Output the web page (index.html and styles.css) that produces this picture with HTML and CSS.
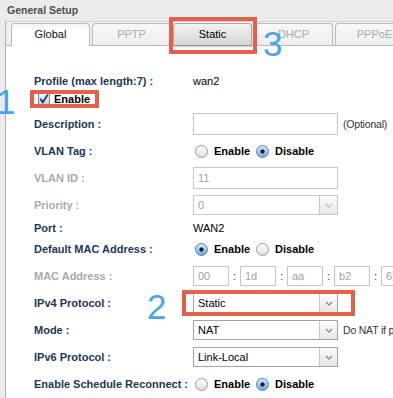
FILE: index.html
```html
<!DOCTYPE html>
<html lang="en">
<head>
    <meta charset="UTF-8">
    <meta name="viewport" content="width=device-width, initial-scale=1.0">
    <title>General Setup</title>
    <link rel="stylesheet" href="styles.css">
</head>
<body>
    <div class="page">
        <div class="title">General Setup</div>

        <div class="panel">
            <div class="tabs">
                <div class="tab active">Global</div>
                <div class="tab">PPTP</div>
                <div class="tab pressed marked">Static</div>
                <div class="tab">DHCP</div>
                <div class="tab">PPPoE</div>
            </div>

            <div class="content">
                <div class="row short">
                    <span class="label">Profile (max length:7) :</span>
                    <span class="value">wan2</span>
                </div>
                <div class="row short">
                    <label class="enable marked">
                        <span class="checkbox">
                            <svg width="12" height="12" viewBox="0 0 12 12"><polyline points="2.3,5.8 4.8,9.2 9.8,1.6" fill="none" stroke="#1d2d52" stroke-width="1.7"/></svg>
                        </span>
                        Enable
                    </label>
                </div>
                <div class="row">
                    <span class="label">Description :</span>
                    <span class="field"></span>
                    <span class="note">(Optional)</span>
                </div>
                <div class="row">
                    <span class="label">VLAN Tag :</span>
                    <span class="radio"></span><span class="opt">Enable</span>
                    <span class="radio on"></span><span class="opt">Disable</span>
                </div>
                <div class="row">
                    <span class="label off">VLAN ID :</span>
                    <span class="field dim">11</span>
                </div>
                <div class="row">
                    <span class="label off">Priority :</span>
                    <div class="select dim">
                        <span class="select-text">0</span>
                        <span class="select-arrow"><svg width="8" height="5" viewBox="0 0 8 5"><polyline points="1,1 4,4 7,1" fill="none" stroke="#c4c4c4" stroke-width="1.3"/></svg></span>
                    </div>
                </div>
                <div class="row text">
                    <span class="label">Port :</span>
                    <span class="value">WAN2</span>
                </div>
                <div class="row text">
                    <span class="label">Default MAC Address :</span>
                    <span class="radio on"></span><span class="opt">Enable</span>
                    <span class="radio"></span><span class="opt">Disable</span>
                </div>
                <div class="row mac">
                    <span class="label off">MAC Address :</span>
                    <span class="field small dim">00</span><span class="colon">:</span>
                    <span class="field small dim">1d</span><span class="colon">:</span>
                    <span class="field small dim">aa</span><span class="colon">:</span>
                    <span class="field small dim">b2</span><span class="colon">:</span>
                    <span class="field small dim">67</span>
                </div>
                <div class="row">
                    <span class="label">IPv4 Protocol :</span>
                    <div class="select marked">
                        <span class="select-text">Static</span>
                        <span class="select-arrow"><svg width="8" height="5" viewBox="0 0 8 5"><polyline points="1,1 4,4 7,1" fill="none" stroke="#8a8a8a" stroke-width="1.3"/></svg></span>
                    </div>
                </div>
                <div class="row">
                    <span class="label">Mode :</span>
                    <div class="select">
                        <span class="select-text">NAT</span>
                        <span class="select-arrow"><svg width="8" height="5" viewBox="0 0 8 5"><polyline points="1,1 4,4 7,1" fill="none" stroke="#8a8a8a" stroke-width="1.3"/></svg></span>
                    </div>
                    <span class="note">Do NAT if private IP</span>
                </div>
                <div class="row">
                    <span class="label">IPv6 Protocol :</span>
                    <div class="select">
                        <span class="select-text">Link-Local</span>
                        <span class="select-arrow"><svg width="8" height="5" viewBox="0 0 8 5"><polyline points="1,1 4,4 7,1" fill="none" stroke="#8a8a8a" stroke-width="1.3"/></svg></span>
                    </div>
                </div>
                <div class="row">
                    <span class="label">Enable Schedule Reconnect :</span>
                    <span class="radio"></span><span class="opt">Enable</span>
                    <span class="radio on"></span><span class="opt">Disable</span>
                </div>
            </div>
        </div>

        <!-- numbered callouts drawn over the form -->
        <span class="step step-1">1</span>
        <span class="step step-2">2</span>
        <span class="step step-3">3</span>
    </div>
</body>
</html>
```

FILE: styles.css
```css
html, body {
    overflow: hidden;
}

body {
    margin: 0;
    background-color: #ebebeb;
    font-family: "Liberation Sans", Arial, sans-serif;
    font-size: 11px;
    color: #000;
}

.page {
    position: relative;
    height: 398px;
    overflow: hidden;
    white-space: nowrap;
}

.title {
    height: 21px;
    line-height: 21px;
    padding-left: 7px;
    font-size: 10.5px;
    font-weight: bold;
    color: #4e4e4e;
}

.panel {
    margin-left: 5px;
    border-left: 1px solid #b3b3b3;
    border-top: 1px solid #d2d2d2;
    background-color: #efefef;
    height: 376px;
}

/* tab strip */
.tabs {
    display: flex;
    gap: 2px;
    padding: 1px 0 0 5px;
    border-bottom: 1px solid #bababa;
}

.tab {
    position: relative;
    flex-shrink: 0;
    width: 77px;
    height: 21px;
    line-height: 21px;
    text-align: center;
    border: 1px solid #bcbcbc;
    border-bottom: none;
    border-radius: 4px 4px 0 0;
    background: linear-gradient(#f8f8f8, #ededed);
    color: #ababab;
}

.tab.active {
    height: 22px;
    margin-bottom: -1px;
    background: linear-gradient(#f6f6f6, #ffffff 40%);
    color: #111;
}

.tab.pressed {
    background: linear-gradient(#f2f2f2, #d5d5d5);
    border-color: #a9a9a9;
    color: #000;
    box-shadow: 0 2px 2px rgba(0, 0, 0, 0.22);
}

/* red annotation frames */
.marked {
    position: relative;
}

.marked::after {
    content: "";
    position: absolute;
    border: 4px solid #e5604b;
    z-index: 2;
}

.tab.marked::after {
    top: -7px;
    bottom: -9px;
    left: -5px;
    right: -6px;
}

.enable.marked::after {
    top: -3px;
    bottom: -3px;
    left: -4px;
    right: -9px;
}

.select.marked::after {
    top: -4px;
    bottom: -4px;
    left: -12px;
    right: -18px;
}

/* form area */
.content {
    background-color: #fff;
    padding: 26px 0 0 28px;
    height: 330px;
}

.row {
    display: flex;
    align-items: center;
    height: 22px;
    margin-top: 5px;
}

.row > * {
    flex-shrink: 0;
}

.row.short {
    height: 18px;
    margin-top: 0;
}

.row.text {
    height: 18px;
    margin-top: 3px;
}

.row.mac {
    margin-top: 7px;
}

.label {
    width: 159px;
    font-weight: bold;
    color: #1c3659;
}

.label.off {
    color: #a9a9a9;
}

.enable {
    display: flex;
    align-items: center;
    gap: 4px;
    padding-left: 4px;
    font-weight: bold;
}

.checkbox {
    display: flex;
    width: 10px;
    height: 10px;
    border: 1px solid #7e8797;
    border-radius: 2px;
    background: linear-gradient(#eef4fc, #bcd2ee);
}

.checkbox svg {
    margin: -1px;
}

.field {
    box-sizing: border-box;
    width: 145px;
    height: 22px;
    line-height: 20px;
    padding-left: 4px;
    border: 1px solid #c6c6c6;
    background-color: #fff;
}

.field.dim {
    color: #a2a2a2;
}

.field.small {
    width: 36px;
    height: 20px;
    line-height: 18px;
}

.colon {
    width: 11px;
    text-align: center;
    color: #333;
}

.note {
    margin-left: 5px;
    font-size: 10.5px;
    letter-spacing: -0.2px;
    color: #333;
}

.radio {
    box-sizing: border-box;
    width: 13px;
    height: 13px;
    margin-left: 2px;
    border: 1px solid #999;
    border-radius: 50%;
    background: linear-gradient(#ffffff, #dedede);
}

.radio.on {
    border-color: #5d7fa8;
    background: radial-gradient(circle, #1b1b1b 0 1.8px, transparent 2.4px), linear-gradient(#d5e7fa, #6ea8e6);
}

.opt {
    margin: 0 4px 0 6px;
    font-weight: bold;
}

.select {
    box-sizing: border-box;
    display: flex;
    width: 145px;
    height: 20px;
    border: 1px solid #a3a3a3;
    background-color: #fff;
}

.select-text {
    flex: 1;
    padding-left: 4px;
    line-height: 18px;
}

.select-arrow {
    display: flex;
    align-items: center;
    justify-content: center;
    width: 17px;
    border-left: 1px solid #c9c9c9;
    background: linear-gradient(#fbfbfb, #e7e7e7);
}

.select.dim {
    border-color: #c9c9c9;
    color: #a2a2a2;
}

/* big blue step numbers */
.step {
    position: absolute;
    font-size: 35px;
    line-height: 35px;
    color: #47a3f2;
    z-index: 3;
}

.step-1 {
    top: 84px;
    left: -4px;
}

.step-2 {
    top: 289px;
    left: 147px;
}

.step-3 {
    top: 26px;
    left: 263px;
}
```
